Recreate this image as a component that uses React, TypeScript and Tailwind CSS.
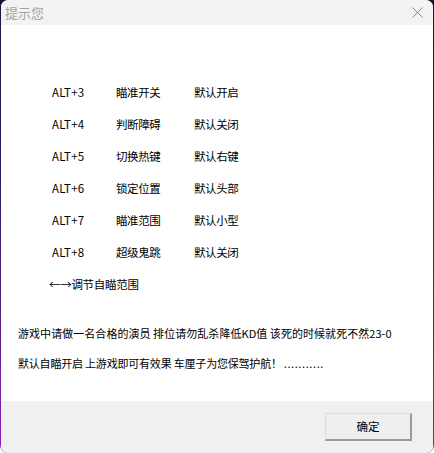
import React from "react";

const rows: [string, string, string][] = [
  ["ALT+3", "瞄准开关", "默认开启"],
  ["ALT+4", "判断障碍", "默认关闭"],
  ["ALT+5", "切换热键", "默认右键"],
  ["ALT+6", "锁定位置", "默认头部"],
  ["ALT+7", "瞄准范围", "默认小型"],
  ["ALT+8", "超级鬼跳", "默认关闭"],
];

export default function App() {
  return (
    <div
      className="w-[434px] h-[453px] bg-[linear-gradient(to_bottom,#171335_0%,#171335_50%,#ffffff_50%)]"
      style={{ fontFamily: '"Noto Sans CJK SC", "Microsoft YaHei", sans-serif' }}
    >
      <div className="w-full h-full rounded-[8px] px-[1px] bg-[linear-gradient(to_bottom,#1a1740_0%,#3a1d6e_50%,#8a22b8_100%)] overflow-hidden">
        <div className="w-full h-full flex flex-col rounded-[7px] overflow-hidden bg-white">
          {/* title bar */}
          <div className="h-[25px] bg-[#f3f3f3] flex items-center justify-between pl-[4px] pr-[10px]">
            <span className="text-[13px] leading-none text-[#a3a3a3]">提示您</span>
            <svg width="11" height="11" viewBox="0 0 11 11">
              <path d="M0.5 0.5 L10.5 10.5 M10.5 0.5 L0.5 10.5" stroke="#8a8a8a" strokeWidth="1" fill="none" />
            </svg>
          </div>
          {/* content */}
          <div className="h-[376px] bg-white pt-[52px] text-[11.5px] text-black">
            <div className="flex flex-col">
              {rows.map((r) => (
                <div key={r[0]} className="h-[32px] flex items-center pl-[51px]">
                  <span className="w-[64px] tracking-[0.2px]">{r[0]}</span>
                  <span className="w-[78px] tracking-[-0.4px]">{r[1]}</span>
                  <span className="tracking-[-0.4px]">{r[2]}</span>
                </div>
              ))}
              <div className="h-[32px] flex items-center pl-[48px] tracking-[-0.3px]">←→调节自瞄范围</div>
            </div>
            <div className="mt-[17px] pl-[17px] flex flex-col text-[11px]">
              <div className="h-[30px] flex items-center whitespace-nowrap tracking-[0.05px]">游戏中请做一名合格的演员 排位请勿乱杀降低KD值 该死的时候就死不然23-0</div>
              <div className="h-[30px] flex items-center whitespace-nowrap tracking-[-0.2px]">默认自瞄开启 上游戏即可有效果 车厘子为您保驾护航！ <span className="tracking-[0.6px] ml-[2px]">...........</span></div>
            </div>
          </div>
          {/* footer */}
          <div className="flex-1 bg-[#f0f0f0] flex justify-end items-start pt-[12px] pr-[21px]">
            <button className="w-[87px] h-[28px] bg-[#efefef] border-t border-l border-t-[#dcdcdc] border-l-[#dcdcdc] border-b-2 border-r-2 border-b-[#9a9a9a] border-r-[#9a9a9a] text-[11.5px] text-black flex items-center justify-center">
              确定
            </button>
          </div>
        </div>
      </div>
    </div>
  );
}
